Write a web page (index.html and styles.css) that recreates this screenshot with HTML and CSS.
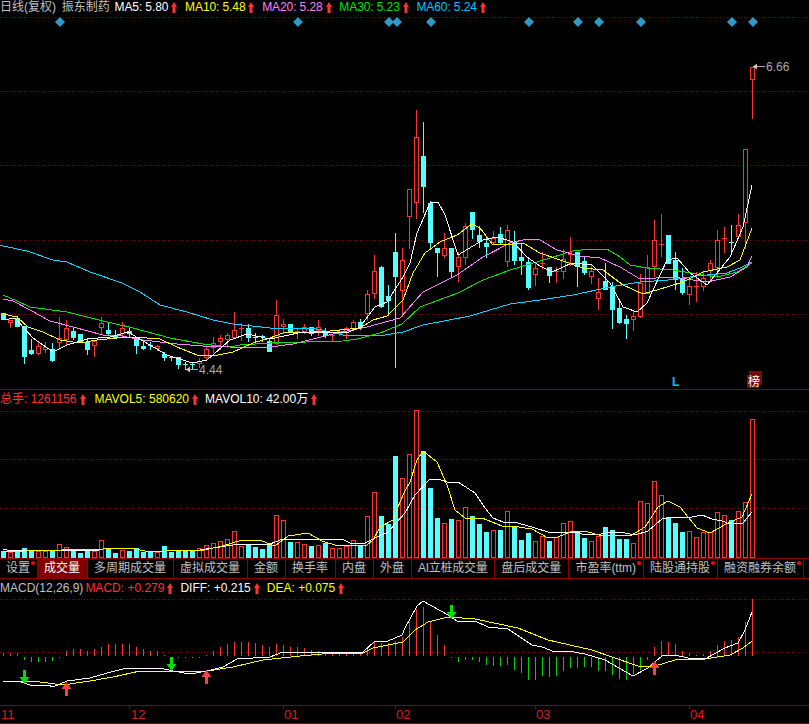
FILE: index.html
```html
<!DOCTYPE html>
<html lang="zh-CN">
<head>
<meta charset="utf-8">
<title>日线(复权) 振东制药</title>
<link rel="stylesheet" href="styles.css">
</head>
<body>
<main class="terminal">
  <section class="panel">
    <div class="legend legend-price">
      <span class="muted title">日线(复权)</span>
      <span class="muted name">振东制药</span>
      <span class="item white">MA5: 5.80<svg class="up" viewBox="0 0 6 11"><path d="M3 0L6 5H4.5V11H1.5V5H0Z"/></svg></span>
      <span class="item yellow">MA10: 5.48<svg class="up" viewBox="0 0 6 11"><path d="M3 0L6 5H4.5V11H1.5V5H0Z"/></svg></span>
      <span class="item pink">MA20: 5.28<svg class="up" viewBox="0 0 6 11"><path d="M3 0L6 5H4.5V11H1.5V5H0Z"/></svg></span>
      <span class="item green">MA30: 5.23<svg class="up" viewBox="0 0 6 11"><path d="M3 0L6 5H4.5V11H1.5V5H0Z"/></svg></span>
      <span class="item cyan">MA60: 5.24<svg class="up" viewBox="0 0 6 11"><path d="M3 0L6 5H4.5V11H1.5V5H0Z"/></svg></span>
    </div>
    <svg id="price" class="plot plot-price" viewBox="0 14 809 376"></svg>
  </section>

  <section class="panel">
    <div class="legend legend-sub">
      <span class="item red vol-total">总手: 1261156<svg class="up" viewBox="0 0 6 11"><path d="M3 0L6 5H4.5V11H1.5V5H0Z"/></svg></span>
      <span class="item yellow">MAVOL5: 580620<svg class="up" viewBox="0 0 6 11"><path d="M3 0L6 5H4.5V11H1.5V5H0Z"/></svg></span>
      <span class="item white">MAVOL10: 42.00万<svg class="up" viewBox="0 0 6 11"><path d="M3 0L6 5H4.5V11H1.5V5H0Z"/></svg></span>
    </div>
    <svg id="volume" class="plot plot-volume" viewBox="0 408 809 150"></svg>
  </section>

  <nav class="tabs">
    <a class="tab dot">设置</a>
    <a class="tab active">成交量</a>
    <a class="tab">多周期成交量</a>
    <a class="tab">虚拟成交量</a>
    <a class="tab">金额</a>
    <a class="tab">换手率</a>
    <a class="tab">内盘</a>
    <a class="tab">外盘</a>
    <a class="tab tab-tight">AI立桩成交量</a>
    <a class="tab">盘后成交量</a>
    <a class="tab dot">市盈率(ttm)</a>
    <a class="tab dot">陆股通持股</a>
    <a class="tab dot">融资融券余额</a>
  </nav>

  <section class="panel">
    <div class="legend legend-sub">
      <span class="muted macd-name">MACD(12,26,9)</span>
      <span class="item red">MACD: +0.279<svg class="up" viewBox="0 0 6 11"><path d="M3 0L6 5H4.5V11H1.5V5H0Z"/></svg></span>
      <span class="item white">DIFF: +0.215<svg class="up" viewBox="0 0 6 11"><path d="M3 0L6 5H4.5V11H1.5V5H0Z"/></svg></span>
      <span class="item yellow">DEA: +0.075<svg class="up" viewBox="0 0 6 11"><path d="M3 0L6 5H4.5V11H1.5V5H0Z"/></svg></span>
    </div>
    <svg id="macd" class="plot plot-macd" viewBox="0 597 809 127"></svg>
  </section>
</main>
<script src="app.js"></script>
</body>
</html>
```

FILE: styles.css
```css
* { box-sizing: border-box; }

html, body {
  margin: 0;
  background: #000;
}

body {
  width: 809px;
  height: 724px;
  overflow: hidden;
  font-family: "Liberation Sans", "Noto Sans CJK SC", sans-serif;
  font-size: 12px;
  color: #c0c0c0;
}

.terminal {
  display: flex;
  flex-direction: column;
}

.panel {
  display: flex;
  flex-direction: column;
}

.legend {
  display: flex;
  align-items: center;
  white-space: nowrap;
  line-height: 14px;
}

.legend-price {
  height: 14px;
  gap: 7.75px;
}

.legend-price .item { letter-spacing: -0.1px; }

.legend-sub {
  height: 18px;
  gap: 7px;
}

.title { margin-right: -2px; }
.name { margin-right: -3px; }
.vol-total { margin-right: 2px; }
.macd-name { margin-right: -5px; }

.item {
  display: flex;
  align-items: center;
  gap: 3px;
}

.up {
  width: 6px;
  height: 11px;
  fill: #ff3232;
}

.muted { color: #c0c0c0; }
.white { color: #fff; }
.yellow { color: #ffff00; }
.pink { color: #ff80ff; }
.green { color: #00e600; }
.cyan { color: #00c8ff; }
.red { color: #ff3232; }

.plot {
  display: block;
  width: 809px;
  shape-rendering: crispEdges;
}

.plot-price { height: 376px; }
.plot-volume { height: 150px; }
.plot-macd { height: 127px; }

.plot text {
  font-family: "Liberation Sans", "Noto Sans CJK SC", sans-serif;
  font-size: 12px;
}

.price-label { fill: #a8a8a8; }
.mark-l { fill: #00c0ff; font-weight: 700; }
.mark-bang { fill: #fff; }

.plot .axis-label {
  fill: #d82020;
  font-size: 13px;
}

.tabs {
  display: flex;
  height: 21px;
  border-top: 1px solid #900000;
  border-bottom: 1px solid #900000;
  line-height: 19px;
  white-space: nowrap;
}

.tab {
  position: relative;
  padding: 0 7px 0 6px;
  border-right: 1px solid #900000;
  color: #c0c0c0;
}

.tab:first-child {
  width: 38px;
}

.tab-tight {
  letter-spacing: -0.3px;
}

.tab.active {
  background: #800000;
  color: #fff;
}

.tab.dot::after {
  content: "";
  position: absolute;
  top: 2px;
  right: 2px;
  width: 4px;
  height: 4px;
  border-radius: 50%;
  background: #ff0000;
}
```

FILE: app.js
```js
const RED = "#ff3232", CYAN = "#54ffff", GRID = "#8c0000", LINE = "#900000";
const px = i => 3 + 7 * i;

// type, body top, body bottom, wick top, wick bottom (pixel rows)
const candles = [
  "C313,319,313,319","R320,322,320,327","C318,326,316,326","C326,356,326,363","C350,353,339,354","R346,353,342,354",
  "R347,349,342,352","C349,360,343,361","R338,342,317,349","R328,339,320,344","C331,337,327,339","C334,342,334,342",
  "C342,349,338,354","R341,345,341,356","R323,327,317,334","C330,333,323,335","C335,337,330,338","R328,333,322,336",
  "C331,333,328,337","C338,345,338,353","C346,348,340,349","C345,346,342,349","R346,348,345,350","C354,357,352,360",
  "C357,358,356,360","C357,364,357,368","C364,365,362,369","C364,365,362,368","R361,363,358,367","R349,357,347,359",
  "R343,347,337,352","R338,341,335,349","R335,339,333,347","R330,337,312,338","R328,329,323,340","C328,337,324,341",
  "C337,338,333,343","C336,337,335,341","C341,351,338,351","R315,343,300,344","R324,326,319,333","C324,331,324,332",
  "R331,332,328,338","R327,331,324,333","C327,333,327,335","R327,330,320,335","C332,335,328,337","R335,336,334,341",
  "R331,333,329,335","R328,332,327,338","R322,328,320,330","C322,327,319,329","R294,313,290,320","R271,293,255,298",
  "C267,306,266,307","C296,300,285,315","C252,276,233,367","R260,290,248,316","R189,216,189,248","R137,202,110,218",
  "C156,186,122,212","C203,242,201,249","C248,252,248,276","R248,255,233,257","C248,271,248,277","R257,266,252,281",
  "R226,257,223,264","C212,229,212,238","C235,241,226,247","C243,246,237,257","R238,242,231,243","C234,242,227,244",
  "R230,261,225,266","C242,260,231,264","C257,260,243,274","C262,287,258,289","R268,274,262,285","R263,264,252,268",
  "C267,275,267,282","R271,272,267,282","R259,271,249,278","R254,255,237,265","C252,266,252,286","C261,272,257,274",
  "R271,276,265,283","R292,298,278,309","C281,289,263,289","C286,309,282,328","C308,322,302,323","C319,323,315,338",
  "R316,319,310,330","R283,316,274,317","R267,293,255,293","R240,266,220,276","R244,245,214,256","C235,263,235,263",
  "C260,279,252,289","C279,292,268,294","R286,294,277,304","R286,287,272,301","R278,286,272,290","R263,270,260,280",
  "R240,267,230,277","R238,239,227,252","C242,243,225,254","R225,236,214,238","R149,222,149,248","R67,79,67,118"
].map(s => {
  const [t, b, h, l] = s.slice(1).split(",").map(Number);
  return { up: s[0] === "R", t, b, h, l };
});

const volumes = [
  551,552,552,548,551,551,551,551,544,547,551,553,551,551,540,549,553,550,551,548,552,551,552,546,552,551,551,551,548,545,
  543,541,539,531,546,545,547,549,545,515,520,542,542,544,546,545,543,548,548,546,540,546,516,492,516,524,456,478,
  454,410,451,488,518,523,519,520,507,516,524,532,530,530,511,526,540,533,541,536,541,537,523,521,533,538,541,536,527,530,
  539,539,543,501,503,481,495,517,523,532,531,537,532,532,512,515,520,511,502,419
];

const macdBars = [
  3,3,3,-3,-5,-5,-5,-4,-1,5,7,7,5,7,9,12,12,12,12,9,7,5,5,1,0,-1,-1,-1,-1,1,5,9,12,14,14,14,13,11,9,12,11,9,9,8,6,5,2,2,2,2,3,4,8,15,13,13,15,19,
  34,47,49,34,21,11,-1,-5,-3,-3,-5,-8,-9,-9,-8,-13,-16,-23,-23,-19,-20,-19,-14,-11,-11,-10,-10,-14,-14,-18,-22,-23,-17,-13,-3,9,15,14,12,5,3,1,2,5,11,15,16,19,34,57
];

const ma = {
  ma60: "0,245 3,246 27,251 53,260 67,262 90,272 122,283 140,292 160,305 187,312 213,320 233,324 270,328 313,328 343,335 385,335 403,332 423,325 470,316 510,304 540,300 573,295 610,287 640,282 668,280 697,276 727,273 740,268 752,262",
  ma30: "3,295 17,301 30,307 67,312 103,321 133,328 170,338 203,344 230,347 240,345 270,343 343,341 357,339 380,333 402,324 420,307 447,297 458,293 483,280 510,270 540,261 573,251 590,249 607,249 620,257 630,265 647,268 673,270 697,274 717,277 737,272 752,263",
  ma20: "3,299 13,301 30,310 50,321 73,327 103,335 122,336 143,340 177,344 203,346 230,347 270,347 293,344 313,339 337,333 367,327 400,318 423,292 457,275 483,257 510,243 527,239 540,240 557,250 580,256 600,258 620,267 640,279 673,277 707,282 730,277 747,267 752,256",
  ma10: "3,314 17,317 28,327 43,332 60,340 80,343 97,340 117,338 133,337 160,339 177,347 197,355 213,356 233,352 253,343 270,338 283,333 313,332 330,331 360,328 373,320 387,316 403,300 413,273 425,253 440,242 457,235 472,224 480,228 493,245 513,244 523,243 540,253 560,260 583,268 603,270 623,285 643,294 667,287 683,282 703,272 727,267 740,260 752,228",
  ma5: "3,320 15,318 33,338 53,352 67,345 87,339 110,337 128,332 143,341 167,355 192,363 207,360 230,340 247,334 270,339 303,332 347,333 360,327 375,307 387,302 403,277 410,263 417,233 430,203 438,202 445,215 458,255 473,246 483,240 497,237 513,242 527,257 540,266 552,272 572,263 592,265 610,283 623,307 637,312 647,303 667,260 677,258 690,273 707,285 730,257 743,227 752,185"
};

const volMa = {
  white: "3,549 7,550 40,551 100,550 200,550 213,548 233,545 260,544 270,544 283,539 342,539 350,543 363,544 377,537 388,532 405,513 415,495 430,479 438,479 447,482 458,482 475,493 485,508 493,518 503,522 518,523 535,528 548,532 578,532 582,534 595,535 612,532 625,533 635,535 648,531 662,519 672,517 692,517 702,515 712,519 722,521 730,524 743,523 752,512",
  yellow: "3,551 25,551 62,550 78,549 95,550 112,548 130,548 145,551 165,551 205,550 222,546 242,540 262,541 275,546 288,536 308,533 322,541 338,546 367,545 373,540 380,527 393,520 400,502 405,491 410,482 417,460 423,451 437,462 447,485 455,510 465,518 482,518 502,526 512,526 532,529 548,538 558,537 570,532 585,531 602,536 632,535 645,527 658,507 668,501 680,507 697,528 710,533 728,523 742,517 752,494"
};

const macdLines = {
  yellow: "3,681 40,682 63,685 90,681 113,677 140,671 207,671 233,667 263,660 300,656 333,653 363,653 373,648 403,642 415,630 428,622 448,617 475,619 518,628 548,640 592,650 612,657 638,666 655,666 675,660 705,659 730,655 743,648 752,641",
  white: "3,681 18,681 30,685 48,685 53,687 67,681 90,678 107,673 127,668 160,668 173,671 190,674 207,671 223,667 237,659 270,657 283,652 307,652 363,652 375,641 388,641 402,635 405,628 417,606 423,601 448,615 457,621 475,621 488,627 508,629 532,645 542,647 555,652 568,651 585,654 605,660 633,676 648,668 662,656 675,655 688,658 705,659 725,648 738,643 745,630 752,612"
};

const dottedLine = y => `<path d="M0 ${y}.5H809" stroke="${GRID}" stroke-dasharray="1 2" fill="none"/>`;
const solidLine = y => `<path d="M0 ${y}.5H809" stroke="${LINE}" fill="none"/>`;
const poly = (pts, color) => `<polyline points="${pts}" fill="none" stroke="${color}"/>`;

function candle(c, i) {
  const x = px(i), m = x + 0.5;
  if (!c.up) {
    const flat = c.b - c.t < 2;
    return `<path d="M${m} ${c.h}V${c.l + 1}" stroke="${CYAN}"/>` +
      `<rect x="${x - 2}" y="${c.t}" width="5" height="${flat ? 1 : c.b - c.t + 1}" fill="${CYAN}"/>`;
  }
  if (c.b - c.t < 2) {
    return `<path d="M${m} ${c.h}V${c.l + 1}M${x - 2} ${c.t + 0.5}H${x + 3}" stroke="${RED}" fill="none"/>`;
  }
  return `<path d="M${m} ${c.h}V${c.t}M${m} ${c.b}V${c.l + 1}" stroke="${RED}" fill="none"/>` +
    `<rect x="${x - 1.5}" y="${c.t + 0.5}" width="4" height="${c.b - c.t}" fill="#000" stroke="${RED}"/>`;
}

function diamond(x, y) {
  return `<path d="M${x} ${y - 5}L${x + 5} ${y}L${x} ${y + 5}L${x - 5} ${y}Z" fill="#2d9ac8" shape-rendering="auto"/>`;
}

function pointer(x1, x2, y) {
  return `<path d="M${x1} ${y}.5H${x2}" stroke="#a8a8a8"/><path d="M${x1} ${y + 0.5}l4 -3v6Z" fill="#c8c8c8" shape-rendering="auto"/>`;
}

function renderPrice() {
  const grid = [17, 91, 165, 240, 314].map(dottedLine).join("");
  const signals = [60, 298, 389, 397, 431, 529, 578, 599, 641, 732, 753].map(x => diamond(x, 22)).join("");
  const lines = [["ma60", "#00d8ff"], ["ma30", "#00e600"], ["ma20", "#ff80ff"], ["ma10", "#ffff00"], ["ma5", "#ffffff"]]
    .map(([k, c]) => poly(ma[k], c)).join("");
  document.getElementById("price").innerHTML = grid + signals + candles.map(candle).join("") + lines +
    pointer(753, 765, 66) + `<text class="price-label" x="766" y="71">6.66</text>` +
    pointer(186, 198, 369) + `<text class="price-label" x="199" y="374">4.44</text>` +
    `<text class="mark-l" x="672" y="386">L</text>` +
    `<rect x="749" y="371" width="13" height="14" fill="#7a0a0a"/><rect x="747" y="375" width="12" height="13" fill="#7a0a0a"/>` +
    `<text class="mark-bang" x="748" y="386">榜</text>` +
    solidLine(389);
}

function renderVolume() {
  const grid = [411, 459, 508].map(dottedLine).join("");
  const bars = volumes.map((y, i) => {
    const x = px(i);
    return candles[i].up
      ? `<rect x="${x - 1.5}" y="${y + 0.5}" width="4" height="${557 - y}" fill="#000" stroke="${RED}"/>`
      : `<rect x="${x - 2}" y="${y}" width="5" height="${558 - y}" fill="${CYAN}"/>`;
  }).join("");
  document.getElementById("volume").innerHTML = grid + bars + poly(volMa.white, "#fff") + poly(volMa.yellow, "#ffff00");
}

function arrow(x, y, up) {
  const color = up ? "#ff4040" : "#00e000";
  const d = up
    ? `M${x + 0.5} ${y}l5 7h-3.5v7h-3v-7h-3.5Z`
    : `M${x + 0.5} ${y + 14}l5 -7h-3.5v-7h-3v7h-3.5Z`;
  return `<path d="${d}" fill="${color}" shape-rendering="auto"/>`;
}

function renderMacd() {
  const grid = dottedLine(599) + dottedLine(652);
  const bars = macdBars.map((v, i) => {
    if (!v) return "";
    const m = px(i) + 0.5;
    return v > 0
      ? `<path d="M${m} ${656 - v}V656" stroke="${RED}"/>`
      : `<path d="M${m} 657V${657 - v}" stroke="#00d000"/>`;
  }).join("");
  const arrows = arrow(24, 670, false) + arrow(66, 682, true) + arrow(171, 657, false) +
    arrow(206, 670, true) + arrow(451, 605, false) + arrow(654, 661, true);
  const ticks = [[1, "11", 0], [131, "12", 129], [284, "01", 283], [396, "02", 395], [536, "03", 535], [690, "04", 689]];
  const axis = solidLine(705) + solidLine(723) + ticks.map(([x, label, t]) =>
    (t ? `<path d="M${t}.5 706V709" stroke="${LINE}"/>` : "") +
    `<text class="axis-label" x="${x}" y="719">${label}</text>`).join("");
  document.getElementById("macd").innerHTML = grid + bars + poly(macdLines.yellow, "#ffff00") + poly(macdLines.white, "#fff") + arrows + axis;
}

renderPrice();
renderVolume();
renderMacd();
```
